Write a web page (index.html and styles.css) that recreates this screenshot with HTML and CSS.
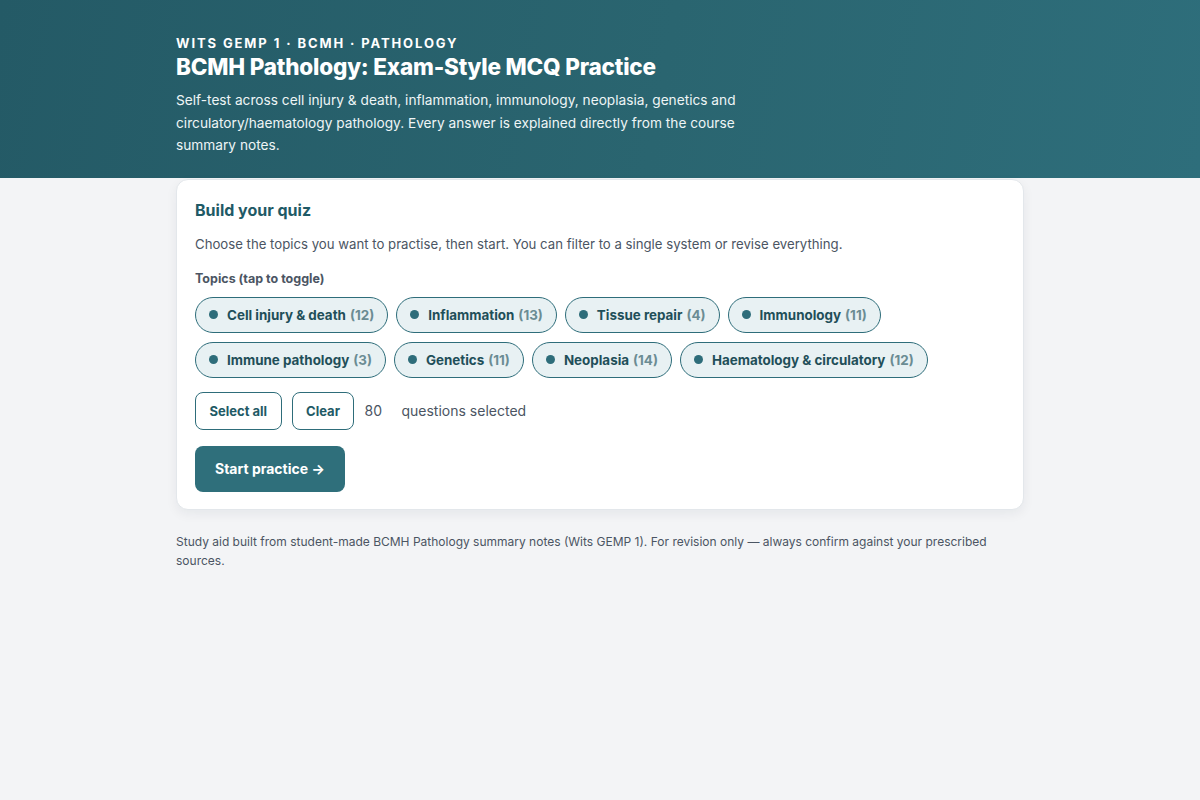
FILE: index.html
```html
<!DOCTYPE html>
<html lang="en">
<head>
    <meta charset="UTF-8">
    <meta name="viewport" content="width=device-width, initial-scale=1.0">
    <title>BCMH Pathology: Exam-Style MCQ Practice</title>
    <link rel="stylesheet" href="styles.css">
</head>
<body>
    <header class="hero">
        <div class="container">
            <div class="eyebrow">Wits GEMP 1 · BCMH · Pathology</div>
            <h1>BCMH Pathology: Exam-Style MCQ Practice</h1>
            <p class="lead">Self-test across cell injury &amp; death, inflammation, immunology, neoplasia, genetics and circulatory/haematology pathology. Every answer is explained directly from the course summary notes.</p>
        </div>
    </header>

    <main class="container">
        <section class="card">
            <h2>Build your quiz</h2>
            <p class="intro">Choose the topics you want to practise, then start. You can filter to a single system or revise everything.</p>

            <div class="label">Topics (tap to toggle)</div>
            <div class="chips">
                <button class="chip"><span class="dot"></span>Cell injury &amp; death <span class="count">(12)</span></button>
                <button class="chip"><span class="dot"></span>Inflammation <span class="count">(13)</span></button>
                <button class="chip"><span class="dot"></span>Tissue repair <span class="count">(4)</span></button>
                <button class="chip"><span class="dot"></span>Immunology <span class="count">(11)</span></button>
                <button class="chip"><span class="dot"></span>Immune pathology <span class="count">(3)</span></button>
                <button class="chip"><span class="dot"></span>Genetics <span class="count">(11)</span></button>
                <button class="chip"><span class="dot"></span>Neoplasia <span class="count">(14)</span></button>
                <button class="chip"><span class="dot"></span>Haematology &amp; circulatory <span class="count">(12)</span></button>
            </div>

            <div class="actions">
                <button class="btn-outline">Select all</button>
                <button class="btn-outline">Clear</button>
                <span class="total">80</span>
                <span class="total-label">questions selected</span>
            </div>

            <button class="btn-primary">Start practice →</button>
        </section>

        <p class="footnote">Study aid built from student-made BCMH Pathology summary notes (Wits GEMP 1). For revision only — always confirm against your prescribed sources.</p>
    </main>
</body>
</html>
```

FILE: styles.css
```css
* {
    margin: 0;
    padding: 0;
    box-sizing: border-box;
}

body {
    font-family: 'Inter', 'Liberation Sans', sans-serif;
    background-color: #f3f4f6;
    color: #1f2937;
}

.container {
    width: 848px;
    margin: 0 auto;
}

/* Header band */
.hero {
    background: linear-gradient(100deg, #245a66 0%, #2a6570 55%, #2e6e7b 100%);
    color: white;
    padding: 35px 0 21px;
}

.eyebrow {
    font-size: 13px;
    font-weight: 700;
    letter-spacing: 1.9px;
    text-transform: uppercase;
    line-height: 16px;
}

.hero h1 {
    font-size: 22.5px;
    font-weight: 800;
    letter-spacing: -0.2px;
    line-height: 28px;
    margin-top: 2px;
}

.lead {
    font-size: 13.7px;
    line-height: 22.5px;
    max-width: 590px;
    margin-top: 8px;
    color: #eef5f6;
}

/* Quiz builder card */
.card {
    background: white;
    border: 1px solid #e3e7eb;
    border-radius: 12px;
    box-shadow: 0 4px 12px rgba(15, 40, 50, 0.06);
    padding: 20px 18px 17px;
    margin-top: 1px;
}

.card h2 {
    font-size: 16px;
    font-weight: 700;
    color: #1f5a66;
    line-height: 20px;
}

.intro {
    font-size: 13.2px;
    color: #4b5563;
    margin-top: 15px;
    line-height: 18px;
}

.label {
    font-size: 12.5px;
    font-weight: 700;
    color: #4b5563;
    margin-top: 18px;
    line-height: 16px;
}

.chips {
    display: flex;
    flex-wrap: wrap;
    gap: 9px 8px;
    margin-top: 10px;
}

.chip {
    display: flex;
    align-items: center;
    height: 36px;
    padding: 0 13px;
    border: 1px solid #2e6d7a;
    border-radius: 18px;
    background-color: #e8f1f3;
    font-family: inherit;
    font-size: 13.4px;
    font-weight: 700;
    color: #1f4f59;
    cursor: pointer;
}

.dot {
    width: 9px;
    height: 9px;
    border-radius: 50%;
    background-color: #2e6d7a;
    margin-right: 9px;
}

.count {
    color: #6b8c93;
    margin-left: 4px;
}

.actions {
    display: flex;
    align-items: center;
    gap: 10px;
    margin-top: 14px;
}

.btn-outline {
    height: 38px;
    padding: 0 13.5px;
    background: white;
    border: 1px solid #2e6d7a;
    border-radius: 8px;
    font-family: inherit;
    font-size: 13px;
    font-weight: 700;
    color: #1f5a66;
    cursor: pointer;
}

.total {
    font-size: 14px;
    color: #4b5563;
    width: 27px;
}

.total-label {
    font-size: 14px;
    color: #4b5563;
}

.btn-primary {
    display: block;
    height: 46px;
    padding: 0 20px;
    margin-top: 16px;
    background-color: #2f6f7b;
    border: none;
    border-radius: 8px;
    font-family: inherit;
    font-size: 14px;
    font-weight: 700;
    color: white;
    cursor: pointer;
}

.footnote {
    font-size: 12px;
    line-height: 19px;
    color: #4b5563;
    margin-top: 22px;
}
```
